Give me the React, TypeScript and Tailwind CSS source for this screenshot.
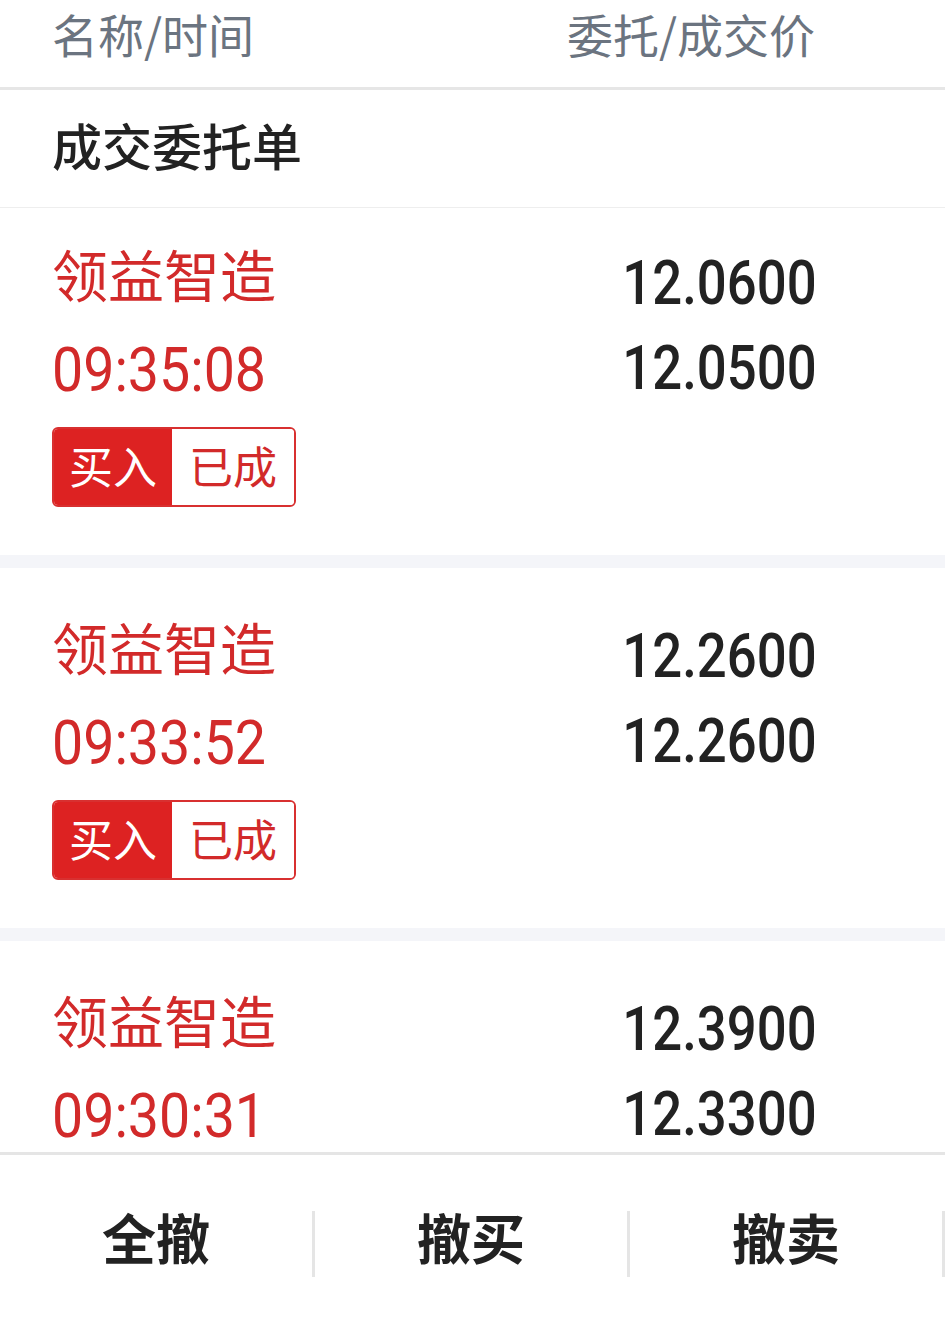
import React from 'react';

interface Order {
  name: string;
  time: string;
  orderPrice: string;
  dealPrice: string;
  side: string;
  status: string;
}

const orders: Order[] = [
  { name: '领益智造', time: '09:35:08', orderPrice: '12.0600', dealPrice: '12.0500', side: '买入', status: '已成' },
  { name: '领益智造', time: '09:33:52', orderPrice: '12.2600', dealPrice: '12.2600', side: '买入', status: '已成' },
  { name: '领益智造', time: '09:30:31', orderPrice: '12.3900', dealPrice: '12.3300', side: '买入', status: '已成' },
];

const cjk = "font-['Noto_Sans_CJK_SC',sans-serif]";
const num = "font-['Roboto','Noto_Sans_CJK_SC',sans-serif]";

function OrderCard({ order, first }: { order: Order; first: boolean }) {
  return (
    <div className={`flex justify-between bg-white pl-[52px] pr-[128px] pb-[48px] ${first ? 'pt-[33px]' : 'pt-[46px]'}`}>
      <div className="flex flex-col items-start">
        <div className={`${cjk} text-[56px] leading-[64px] text-[#d22a2a]`}>{order.name}</div>
        <div className={`${num} mt-[33px] text-[61px] leading-[64px] text-[#d22a2a]`}>
          <span className="inline-block origin-left scale-x-[0.91]">{order.time}</span>
        </div>
        <div className="mt-[25px] flex h-[80px] w-[244px] overflow-hidden rounded-[6px] border-2 border-[#d83030]">
          <div className={`${cjk} flex w-[118px] items-center justify-center bg-[#dd2222] pb-[4px] text-[44px] leading-[60px] text-white`}>
            {order.side}
          </div>
          <div className={`${cjk} flex flex-1 items-center justify-center bg-white pb-[4px] text-[44px] leading-[60px] text-[#d22a2a]`}>
            {order.status}
          </div>
        </div>
      </div>
      <div className="flex flex-col items-end pt-[10px]">
        <div className={`${num} text-[62px] font-medium leading-[64px] text-[#222]`}>
          <span className="inline-block origin-right scale-x-[0.85]">{order.orderPrice}</span>
        </div>
        <div className={`${num} mt-[21px] text-[62px] font-medium leading-[64px] text-[#222]`}>
          <span className="inline-block origin-right scale-x-[0.85]">{order.dealPrice}</span>
        </div>
      </div>
    </div>
  );
}

export default function App() {
  const actions = ['全撤', '撤买', '撤卖'];

  return (
    <div className="flex h-[1323px] w-[945px] flex-col overflow-hidden bg-white">
      {/* column header */}
      <div className={`${cjk} flex h-[90px] shrink-0 justify-between border-b-[3px] border-[#e6e6e6] pl-[52px] pr-[130px] text-[46px] leading-[66px] text-[#6b7480]`}>
        <span>名称/时间</span>
        <span>委托/成交价</span>
      </div>

      <div className="flex-1 overflow-hidden">
        <div className={`${cjk} h-[118px] border-b border-[#eeeeee] pl-[52px] text-[50px] font-medium leading-[108px] text-[#222]`}>
          成交委托单
        </div>
        {orders.map((order, i) => (
          <div key={i}>
            {i > 0 && <div className="h-[13px] bg-[#f4f5f9]" />}
            <OrderCard order={order} first={i === 0} />
          </div>
        ))}
      </div>

      {/* bottom actions */}
      <div className="flex h-[171px] shrink-0 border-t-[3px] border-[#e5e5e5] bg-white">
        {actions.map((label) => (
          <div key={label} className="flex flex-1 items-start">
            <div className={`${cjk} mt-[44px] flex-1 text-center text-[54px] font-bold leading-[76px] text-[#222]`}>
              {label}
            </div>
            <div className="mt-[56px] h-[66px] w-[3px] bg-[#e5e5e5]" />
          </div>
        ))}
      </div>
    </div>
  );
}
